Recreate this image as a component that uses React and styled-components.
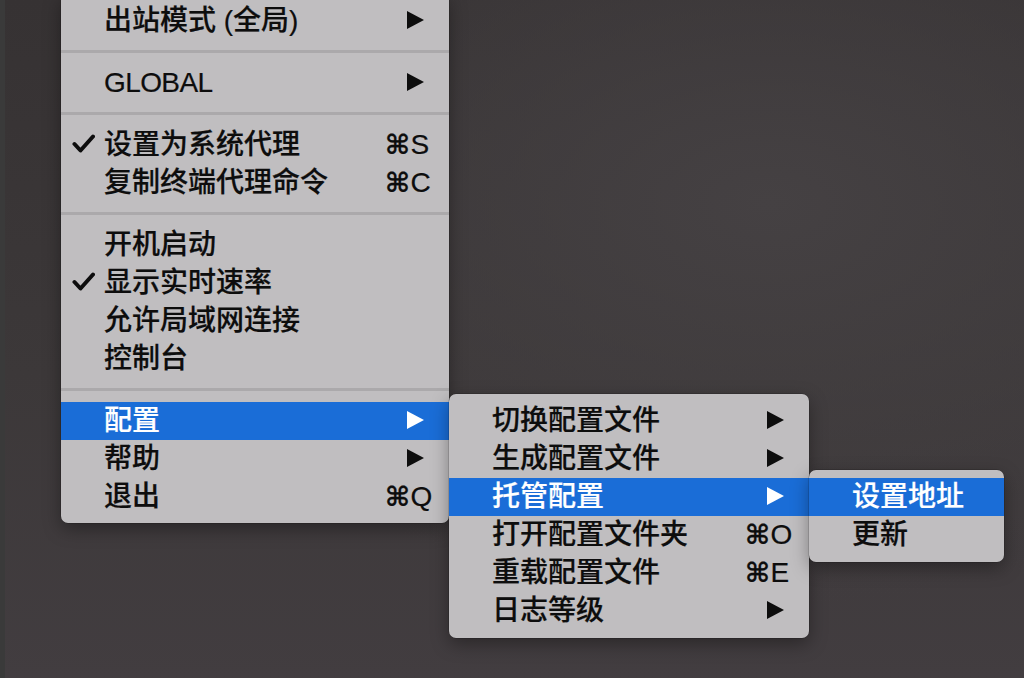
import React from 'react';
import styled, { createGlobalStyle } from 'styled-components';

const GlobalStyle = createGlobalStyle`
  html, body {
    margin: 0;
    padding: 0;
    background: #3a3637;
  }
  #root {
    height: 678px;
  }
`;

const Desktop = styled.div`
  display: flex;
  align-items: flex-start;
  height: 678px;
  overflow: hidden;
  box-sizing: border-box;
  padding-left: 56px;
  border-left: 5px solid #3a3a3a;
  background:
    radial-gradient(ellipse at 75% 30%, #454143 0%, rgba(69, 65, 67, 0) 60%),
    linear-gradient(180deg, #363233 0%, #3c3839 55%, #423d40 100%);
  font-family: 'Liberation Sans', 'Noto Sans CJK SC', 'DejaVu Sans', sans-serif;
`;

const Menu = styled.div`
  flex: none;
  width: ${({ $width }) => $width}px;
  margin-top: ${({ $top }) => $top}px;
  padding: ${({ $padTop }) => $padTop}px 0 ${({ $padBottom }) => $padBottom}px;
  background: #c0bec0;
  border-radius: 7px;
  box-shadow: 0 6px 18px rgba(0, 0, 0, 0.35), 0 0 0 0.5px rgba(0, 0, 0, 0.25);
  position: relative;
  z-index: ${({ $z }) => $z};
`;

const Row = styled.div`
  display: grid;
  grid-template-columns: 43px 1fr ${({ $trail }) => $trail}px;
  align-items: center;
  height: 38px;
  font-size: 28px;
  font-weight: 500;
  line-height: 38px;
  color: ${({ $active }) => ($active ? '#ffffff' : '#0d0d0d')};
  background: ${({ $active }) => ($active ? '#1a6dd7' : 'transparent')};
  white-space: nowrap;
  -webkit-text-stroke: 0.2px currentColor;
`;

const CheckCell = styled.div`
  display: flex;
  align-items: center;
  padding-left: 11px;
  height: 38px;
  padding-bottom: 4px;
  box-sizing: border-box;
`;

const Label = styled.div`
  min-width: 0;
`;

const Latin = styled.span`
  letter-spacing: -0.6px;
`;

const Trailing = styled.div`
  display: flex;
  align-items: center;
  height: 38px;
`;

const Shortcut = styled.span`
  font-size: 28px;
  letter-spacing: -0.5px;
`;

const CmdGlyph = styled.span`
  font-family: 'DejaVu Sans', sans-serif;
  font-weight: 700;
  font-size: 27px;
  margin-right: 1px;
`;

const Arrow = styled.span`
  display: block;
  margin-left: 22px;
  margin-top: -2px;
  width: 0;
  height: 0;
  border-top: 9.5px solid transparent;
  border-bottom: 9.5px solid transparent;
  border-left: 17px solid ${({ $active }) => ($active ? '#ffffff' : '#0d0d0d')};
`;

const Separator = styled.div`
  display: flex;
  align-items: center;
  height: 24px;

  &::after {
    content: '';
    display: block;
    width: 100%;
    height: 3px;
    margin-top: -1px;
    background: #aba9ab;
  }
`;

const Check = ({ color }) => (
  <svg width="23" height="19" viewBox="0 0 23 19">
    <path
      d="M2.5 10 L8.5 16.5 L21 2.5"
      fill="none"
      stroke={color}
      strokeWidth="4"
      strokeLinecap="round"
      strokeLinejoin="round"
    />
  </svg>
);

const Item = ({ label, checked, shortcut, submenu, active, latin, trail }) => (
  <Row $active={active} $trail={trail}>
    <CheckCell>{checked && <Check color={active ? '#fff' : '#0d0d0d'} />}</CheckCell>
    <Label>{latin ? <Latin>{label}</Latin> : label}</Label>
    <Trailing>
      {shortcut && (
        <Shortcut>
          <CmdGlyph>⌘</CmdGlyph>
          {shortcut}
        </Shortcut>
      )}
      {submenu && <Arrow $active={active} />}
    </Trailing>
  </Row>
);

const mainItems = [
  { label: '出站模式 (全局)', submenu: true },
  'sep',
  { label: 'GLOBAL', submenu: true, latin: true },
  'sep',
  { label: '设置为系统代理', checked: true, shortcut: 'S' },
  { label: '复制终端代理命令', shortcut: 'C' },
  'sep',
  { label: '开机启动' },
  { label: '显示实时速率', checked: true },
  { label: '允许局域网连接' },
  { label: '控制台' },
  'sep',
  { label: '配置', submenu: true, active: true },
  { label: '帮助', submenu: true },
  { label: '退出', shortcut: 'Q' },
];

const configItems = [
  { label: '切换配置文件', submenu: true },
  { label: '生成配置文件', submenu: true },
  { label: '托管配置', submenu: true, active: true },
  { label: '打开配置文件夹', shortcut: 'O' },
  { label: '重载配置文件', shortcut: 'E' },
  { label: '日志等级', submenu: true },
];

const remoteItems = [
  { label: '设置地址', active: true },
  { label: '更新' },
];

const renderItems = (items, trail) =>
  items.map((it, i) =>
    it === 'sep' ? <Separator key={i} /> : <Item key={i} trail={trail} {...it} />
  );

const App = () => (
  <>
    <GlobalStyle />
    <Desktop>
      <Menu $width={388} $top={-6} $padTop={8} $padBottom={7} $z={1}>
        {renderItems(mainItems, 64)}
      </Menu>
      <Menu $width={360} $top={394} $padTop={8} $padBottom={8} $z={2}>
        {renderItems(configItems, 64)}
      </Menu>
      <Menu $width={195} $top={470} $padTop={8} $padBottom={8} $z={3}>
        {renderItems(remoteItems, 24)}
      </Menu>
    </Desktop>
  </>
);

export default App;
